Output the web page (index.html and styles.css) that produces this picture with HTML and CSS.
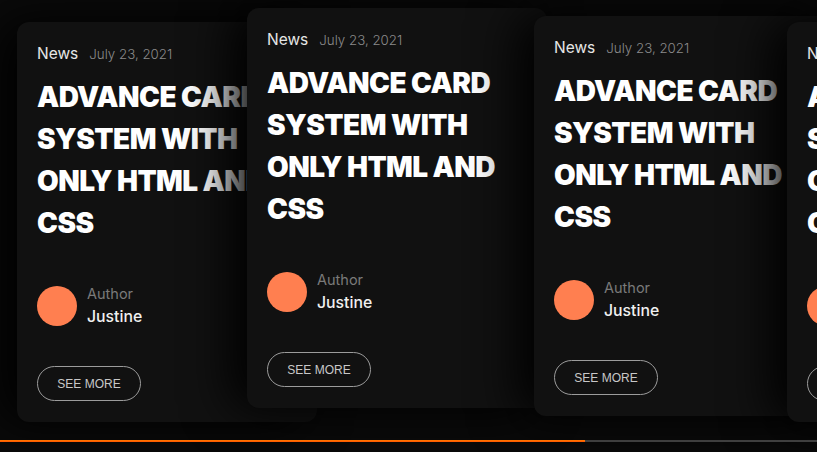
FILE: index.html
```html
<!DOCTYPE html>
<html lang="en">
<head>
<meta charset="utf-8">
<title>Advance Card System</title>
<link rel="stylesheet" href="styles.css">
</head>
<body>
<main class="stage">
  <section class="card-list">
    <article class="card card-a">
      <header class="card-meta"><span class="tag">News</span><span class="date">July 23, 2021</span></header>
      <h2 class="card-title">Advance card system with only HTML and CSS</h2>
      <div class="author">
        <span class="avatar"></span>
        <div class="author-info"><span class="author-label">Author</span><span class="author-name">Justine</span></div>
      </div>
      <button class="more">SEE MORE</button>
    </article>
    <article class="card card-b">
      <header class="card-meta"><span class="tag">News</span><span class="date">July 23, 2021</span></header>
      <h2 class="card-title">Advance card system with only HTML and CSS</h2>
      <div class="author">
        <span class="avatar"></span>
        <div class="author-info"><span class="author-label">Author</span><span class="author-name">Justine</span></div>
      </div>
      <button class="more">SEE MORE</button>
    </article>
    <article class="card card-c">
      <header class="card-meta"><span class="tag">News</span><span class="date">July 23, 2021</span></header>
      <h2 class="card-title">Advance card system with only HTML and CSS</h2>
      <div class="author">
        <span class="avatar"></span>
        <div class="author-info"><span class="author-label">Author</span><span class="author-name">Justine</span></div>
      </div>
      <button class="more">SEE MORE</button>
    </article>
    <article class="card card-d">
      <header class="card-meta"><span class="tag">News</span><span class="date">July 23, 2021</span></header>
      <h2 class="card-title">Advance card system with only HTML and CSS</h2>
      <div class="author">
        <span class="avatar"></span>
        <div class="author-info"><span class="author-label">Author</span><span class="author-name">Justine</span></div>
      </div>
      <button class="more">SEE MORE</button>
    </article>
  </section>
  <div class="scrollbar"><div class="thumb"></div></div>
</main>
</body>
</html>
```
FILE: styles.css
```css
* { box-sizing: border-box; }
html, body { margin: 0; height: 100%; }
body {
  background: #0a0a0a;
  font-family: Inter, "Noto Sans", sans-serif;
  color: #fff;
  overflow: hidden;
}
.stage {
  width: 817px;
  height: 452px;
  display: flex;
  flex-direction: column;
  overflow: hidden;
}
.card-list {
  display: flex;
  align-items: flex-start;
  padding-left: 17px;
  height: 440px;
}
.card {
  flex: 0 0 300px;
  width: 300px;
  height: 400px;
  padding: 22px 20px 21px;
  background: #111111;
  border-radius: 12px;
  box-shadow: -1rem 0 3rem #000;
  display: flex;
  flex-direction: column;
  align-items: flex-start;
}
.card-a { margin-top: 22px; }
.card-b { margin-top: 8px; margin-left: -70px; }
.card-c { margin-top: 16px; margin-left: -13px; }
.card-d { margin-top: 22px; margin-left: -47px; }

.card-meta {
  display: flex;
  align-items: baseline;
  height: 20px;
  line-height: 20px;
  white-space: nowrap;
}
.tag {
  font-size: 15.5px;
  font-weight: 400;
  color: #e6e6e6;
}
.date {
  margin-left: 11px;
  font-size: 13.3px;
  font-weight: 300;
  color: #8a8a8a;
}
.card-title {
  margin: 12px 0 0;
  font-size: 28px;
  font-weight: 900;
  line-height: 42px;
  letter-spacing: -0.55px;
  text-transform: uppercase;
  color: #fff;
  width: 240px;
  height: 168px;
}
.author {
  margin-top: 42px;
  display: flex;
  align-items: flex-start;
  height: 40px;
}
.avatar {
  width: 40px;
  height: 40px;
  border-radius: 50%;
  background: #ff7f50;
  flex: none;
}
.author-info {
  margin-left: 10px;
  margin-top: 0;
  display: flex;
  flex-direction: column;
  white-space: nowrap;
}
.author-label {
  font-size: 14.5px;
  line-height: 16px;
  color: #7a7a7a;
}
.author-name {
  margin-top: 4px;
  font-size: 15.8px;
  line-height: 22px;
  font-weight: 500;
  color: #f0f0f0;
}
.more {
  margin-top: 40px;
  width: 104px;
  height: 35px;
  padding: 0;
  border: 1px solid #9c9c9c;
  border-radius: 18px;
  background: transparent;
  color: #c8c8c8;
  font-family: "Liberation Sans", Arial, sans-serif;
  font-size: 12px;
}
.scrollbar {
  height: 2px;
  background: #3f3f3f;
  width: 817px;
}
.thumb {
  width: 585px;
  height: 2px;
  background: linear-gradient(#ff7a00, #ff5400);
}
```
